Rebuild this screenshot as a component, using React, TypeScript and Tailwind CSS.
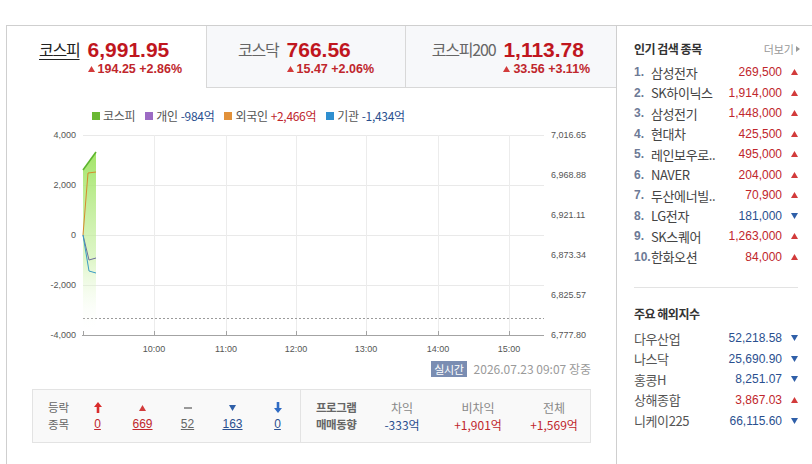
import React from "react";

const KR = { fontFamily: '"Noto Sans CJK KR", "Noto Sans", sans-serif' };
const NUM = { fontFamily: '"Liberation Sans", Arial, sans-serif' };

const INDEX_TABS = [
  { name: "코스피", value: "6,991.95", change: "194.25 +2.86%", active: true, width: "w-[199px]" },
  { name: "코스닥", value: "766.56", change: "15.47 +2.06%", active: false, width: "w-[199px]" },
  { name: "코스피200", value: "1,113.78", change: "33.56 +3.11%", active: false, width: "w-[211px]" },
];

const POPULAR = [
  { name: "삼성전자", price: "269,500", up: true },
  { name: "SK하이닉스", price: "1,914,000", up: true },
  { name: "삼성전기", price: "1,448,000", up: true },
  { name: "현대차", price: "425,500", up: true },
  { name: "레인보우로..", price: "495,000", up: true },
  { name: "NAVER", price: "204,000", up: true },
  { name: "두산에너빌..", price: "70,900", up: true },
  { name: "LG전자", price: "181,000", up: false },
  { name: "SK스퀘어", price: "1,263,000", up: true },
  { name: "한화오션", price: "84,000", up: true },
];

const WORLD = [
  { name: "다우산업", value: "52,218.58", up: false },
  { name: "나스닥", value: "25,690.90", up: false },
  { name: "홍콩H", value: "8,251.07", up: false },
  { name: "상해종합", value: "3,867.03", up: true },
  { name: "니케이225", value: "66,115.60", up: false },
];

function Tri({ up, className = "" }: { up: boolean; className?: string }) {
  return (
    <svg width="7" height="6" viewBox="0 0 7 6" className={className}>
      {up ? (
        <polygon points="3.5,0 7,6 0,6" fill="#d23b3b" />
      ) : (
        <polygon points="0,0 7,0 3.5,6" fill="#2f5fa8" />
      )}
    </svg>
  );
}

function BoldArrow({ up }: { up: boolean }) {
  return (
    <svg width="8" height="11" viewBox="0 0 8 11">
      {up ? (
        <polygon points="4,0 8,5 5.3,5 5.3,11 2.7,11 2.7,5 0,5" fill="#d92c2c" />
      ) : (
        <polygon points="2.7,0 5.3,0 5.3,6 8,6 4,11 0,6 2.7,6" fill="#2f6bc4" />
      )}
    </svg>
  );
}

// page coords -> svg coords
const OX = 6;
const OY = 125;
const px = (x: number) => x - OX;
const py = (y: number) => y - OY;

function Chart() {
  const hours = [
    { x: 153, t: "10:00" },
    { x: 225, t: "11:00" },
    { x: 295, t: "12:00" },
    { x: 365, t: "13:00" },
    { x: 437, t: "14:00" },
    { x: 508, t: "15:00" },
  ];
  const left = [
    { y: 135, t: "4,000" },
    { y: 185, t: "2,000" },
    { y: 235, t: "0" },
    { y: 285, t: "-2,000" },
    { y: 335, t: "-4,000" },
  ];
  const right = [
    { y: 135, t: "7,016.65" },
    { y: 175, t: "6,968.88" },
    { y: 215, t: "6,921.11" },
    { y: 255, t: "6,873.34" },
    { y: 295, t: "6,825.57" },
    { y: 335, t: "6,777.80" },
  ];
  const pts = (arr: number[][]) => arr.map(([x, y]) => `${px(x)},${py(y)}`).join(" ");
  return (
    <svg width="609" height="232" viewBox="0 0 609 232" className="block mt-[2px]" style={NUM}>
      <defs>
        <linearGradient id="kospiFill" x1="0" y1="0" x2="0" y2="1">
          <stop offset="0" stopColor="#9de35f" stopOpacity="0.95" />
          <stop offset="0.6" stopColor="#c9f0a4" stopOpacity="0.6" />
          <stop offset="1" stopColor="#ffffff" stopOpacity="0" />
        </linearGradient>
      </defs>

      {/* grid */}
      {left.slice(0, 4).map((l) => (
        <line key={l.y} x1={px(82)} x2={px(543)} y1={py(l.y) + 0.5} y2={py(l.y) + 0.5} stroke="#e9e9e9" />
      ))}
      {hours.map((h) => (
        <line key={h.x} x1={px(h.x) + 0.5} x2={px(h.x) + 0.5} y1={py(135)} y2={py(335)} stroke="#ececec" />
      ))}
      <line x1={px(82)} x2={px(543)} y1={py(318) + 0.5} y2={py(318) + 0.5} stroke="#9a9a9a" strokeDasharray="2,2" />
      <line x1={px(81)} x2={px(543)} y1={py(335) + 0.5} y2={py(335) + 0.5} stroke="#a3a3a3" />
      {[82, ...hours.map((h) => h.x)].map((x) => (
        <line key={x} x1={px(x) + 0.5} x2={px(x) + 0.5} y1={py(331)} y2={py(335)} stroke="#a3a3a3" />
      ))}

      {/* series */}
      <polygon points={pts([[82, 170], [95, 152], [95, 332], [82, 332]])} fill="url(#kospiFill)" />
      <polyline points={pts([[82, 170], [95, 152]])} fill="none" stroke="#5db52f" strokeWidth="1.6" />
      <polyline points={pts([[82, 235], [87, 173], [95, 172]])} fill="none" stroke="#d68a2c" strokeWidth="1" />
      <polyline points={pts([[82, 235], [88, 260], [95, 258]])} fill="none" stroke="#6f6f9a" strokeWidth="1" />
      <polyline points={pts([[82, 235], [88, 271], [95, 273]])} fill="none" stroke="#3a9bc4" strokeWidth="1" />

      {/* axis labels */}
      {left.map((l) => (
        <text key={l.t} x={px(75)} y={py(l.y) + 3} textAnchor="end" fontSize="9" fill="#555">
          {l.t}
        </text>
      ))}
      {right.map((r) => (
        <text key={r.t} x={px(550)} y={py(r.y) + 3} fontSize="9" fill="#555">
          {r.t}
        </text>
      ))}
      {hours.map((h) => (
        <text key={h.t} x={px(h.x)} y={py(352)} textAnchor="middle" fontSize="9" fill="#555">
          {h.t}
        </text>
      ))}
    </svg>
  );
}

export default function App() {
  return (
    <div className="w-[812px] h-[464px] overflow-hidden bg-white pt-[25px] pl-[6px] flex" style={KR}>
      {/* left: index tabs + chart */}
      <div className="w-[610px] shrink-0 border-l border-t border-[#cfcfcf] flex flex-col">
        <div className="flex h-[62px]">
          {INDEX_TABS.map((t, i) => (
            <div
              key={t.name}
              className={`${t.width} shrink-0 flex items-start justify-center pt-[12px] gap-[8px] ${
                t.active ? "bg-white" : "bg-[#f7f8fa] border-b border-[#d8d8d8]"
              } ${i > 0 ? "border-l border-[#d8d8d8]" : ""} ${i === 0 ? "pl-[8px]" : ""}`}
            >
              <span
                className={`text-[16px] leading-[24px] tracking-[-1.2px] mt-[-1px] ${
                  t.active ? "text-[#222] underline underline-offset-[3px]" : "text-[#666]"
                }`}
              >
                {t.name}
              </span>
              <div className="flex flex-col">
                <span className="text-[21px] leading-[24px] font-bold text-[#c0161e]" style={NUM}>
                  {t.value}
                </span>
                <span className="flex items-center gap-[3px] text-[12.5px] leading-[14px] font-bold text-[#c0262c]" style={NUM}>
                  <Tri up />
                  {t.change}
                </span>
              </div>
            </div>
          ))}
        </div>

        {/* legend */}
        <div className="flex items-center gap-[10px] pl-[85px] mt-[21px] h-[14px] text-[12px] text-[#555] tracking-[-0.3px]">
          <span className="flex items-center gap-[3px]">
            <span className="w-[8px] h-[8px] bg-[#6ab833]" />
            코스피
          </span>
          <span className="flex items-center gap-[3px]">
            <span className="w-[8px] h-[8px] bg-[#9c6bc4]" />
            개인 <span className="text-[#2a4f8f]">-984억</span>
          </span>
          <span className="flex items-center gap-[3px]">
            <span className="w-[8px] h-[8px] bg-[#e2913a]" />
            외국인 <span className="text-[#c0262c]">+2,466억</span>
          </span>
          <span className="flex items-center gap-[3px]">
            <span className="w-[8px] h-[8px] bg-[#2f8fd0]" />
            기관 <span className="text-[#2a4f8f]">-1,434억</span>
          </span>
        </div>

        <Chart />

        {/* timestamp */}
        <div className="flex items-center justify-end gap-[7px] pr-[25px] mt-[3px] h-[17px]">
          <span className="bg-[#7a8db2] text-white text-[11px] leading-[16px] px-[3px] tracking-[-0.3px]">실시간</span>
          <span className="text-[12px] text-[#9a9a9a]">2026.07.23 09:07 장중</span>
        </div>

        {/* rise/fall counts & program trading */}
        <div className="mx-[25px] mt-[12px] h-[54px] border border-[#e3e3e3] bg-[#f9f9f9] flex">
          <div className="w-[268px] flex items-center border-r border-[#e3e3e3] pl-[15px]">
            <div className="flex flex-col text-[11.5px] leading-[17px] text-[#666] w-[27px]">
              <span>등락</span>
              <span>종목</span>
            </div>
            {[
              { icon: <BoldArrow up />, n: "0", c: "text-[#c0262c]" },
              { icon: <Tri up />, n: "669", c: "text-[#c0262c]" },
              { icon: <span className="block w-[8px] h-[2px] bg-[#999]" />, n: "52", c: "text-[#666]" },
              { icon: <Tri up={false} />, n: "163", c: "text-[#2a4f8f]" },
              { icon: <BoldArrow up={false} />, n: "0", c: "text-[#2a4f8f]" },
            ].map((col, i) => (
              <div key={i} className="w-[45px] flex flex-col items-center">
                <span className="h-[17px] flex items-center">{col.icon}</span>
                <span className={`text-[12px] leading-[17px] underline ${col.c}`} style={NUM}>
                  {col.n}
                </span>
              </div>
            ))}
          </div>
          <div className="flex-1 flex items-center pl-[15px]">
            <div className="flex flex-col text-[11.5px] leading-[17px] text-[#666] font-bold tracking-[-0.5px] w-[48px]">
              <span>프로그램</span>
              <span>매매동향</span>
            </div>
            {[
              { h: "차익", v: "-333억", c: "text-[#2a4f8f]" },
              { h: "비차익", v: "+1,901억", c: "text-[#c0262c]" },
              { h: "전체", v: "+1,569억", c: "text-[#c0262c]" },
            ].map((col) => (
              <div key={col.h} className="w-[76px] flex flex-col items-center text-[12px] leading-[17px]">
                <span className="text-[#888]">{col.h}</span>
                <span className={col.c}>{col.v}</span>
              </div>
            ))}
          </div>
        </div>
      </div>

      {/* right: popular searches & world indices */}
      <div className="w-[200px] shrink-0 border-l border-t border-[#cfcfcf] pl-[17px] pr-[18px]">
        <div className="flex items-center justify-between mt-[14px] h-[18px]">
          <span className="text-[12px] font-bold text-[#333] tracking-[-0.5px]">인기 검색 종목</span>
          <span className="flex items-center gap-[2px] text-[11px] text-[#999] mr-[-2px]">
            더보기
            <svg width="4" height="6" viewBox="0 0 4 6">
              <polygon points="0,0 4,3 0,6" fill="#999" />
            </svg>
          </span>
        </div>
        <div className="mt-[4px]">
          {POPULAR.map((p, i) => (
            <div key={p.name} className="flex items-center h-[20.5px]">
              <span className="w-[17px] text-[12px] font-bold text-[#6d7a96]" style={NUM}>
                {i + 1}.
              </span>
              <span className="flex-1 text-[13px] text-[#444] tracking-[-0.4px] whitespace-nowrap">{p.name}</span>
              <span className={`text-[12px] ${p.up ? "text-[#c0262c]" : "text-[#2a4f8f]"}`} style={NUM}>
                {p.price}
              </span>
              <Tri up={p.up} className="ml-[9px]" />
            </div>
          ))}
        </div>
        <div className="border-t border-[#e3e3e3] mt-[20px]" />
        <div className="mt-[17px] h-[18px] flex items-center text-[12px] font-bold text-[#333] tracking-[-0.5px]">
          주요 해외지수
        </div>
        <div className="mt-[5px]">
          {WORLD.map((w) => (
            <div key={w.name} className="flex items-center h-[20.6px]">
              <span className="flex-1 text-[13px] text-[#555] tracking-[-0.4px]">{w.name}</span>
              <span className={`text-[12px] ${w.up ? "text-[#c0262c]" : "text-[#2a4f8f]"}`} style={NUM}>
                {w.value}
              </span>
              <Tri up={w.up} className="ml-[9px]" />
            </div>
          ))}
        </div>
      </div>
    </div>
  );
}
